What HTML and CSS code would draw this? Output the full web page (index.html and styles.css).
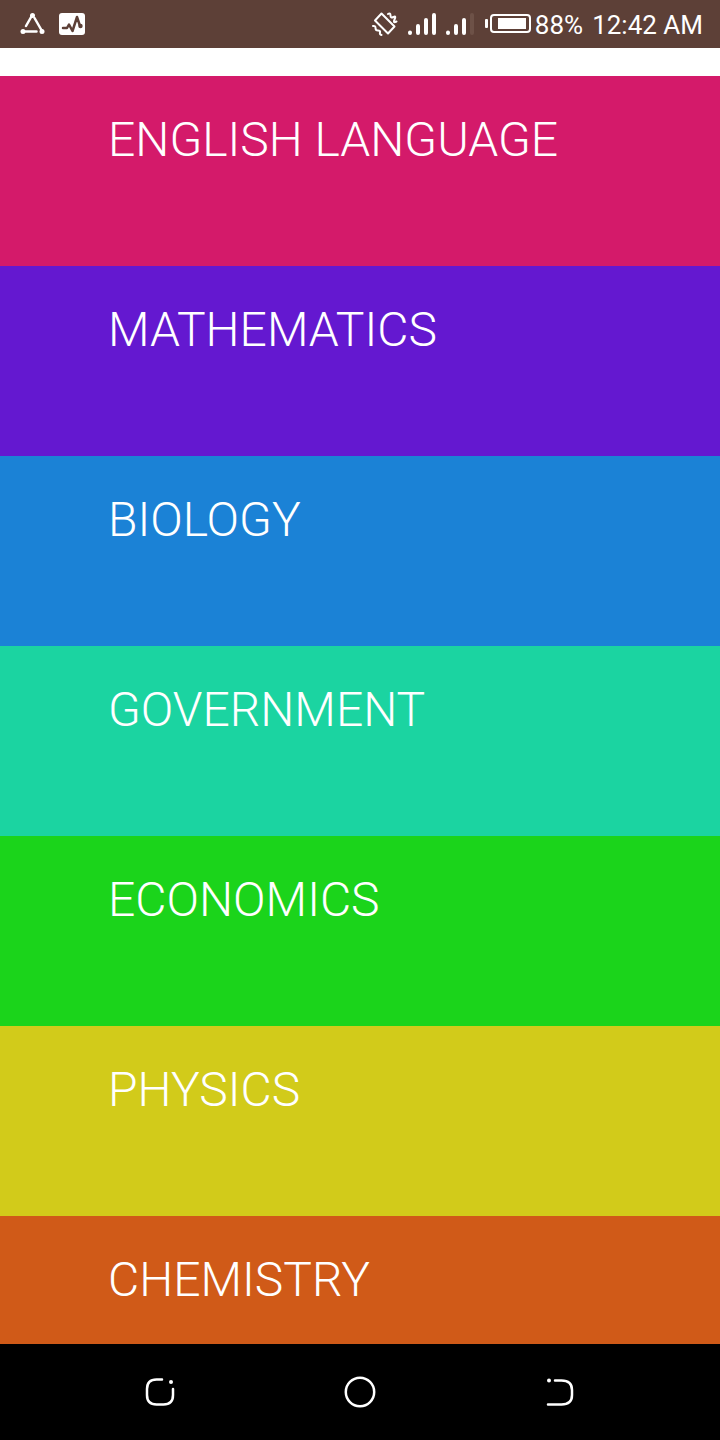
FILE: index.html
```html
<!DOCTYPE html>
<html lang="en">
<head>
    <meta charset="UTF-8">
    <meta name="viewport" content="width=device-width, initial-scale=1">
    <title>Subjects</title>
    <link rel="stylesheet" href="styles.css">
</head>
<body>
    <!-- Status bar -->
    <header class="status-bar">
        <div class="notifications">
            <svg width="26" height="24" viewBox="0 0 26 24" fill="none" stroke="#fff" stroke-width="2.500" stroke-linecap="round">
                <path d="M12 3.500L6 14M14.500 6L22 19M3.500 19.500H16.500"/>
                <g fill="#fff" stroke="none">
                    <circle cx="12.500" cy="3.500" r="2.500"/>
                    <circle cx="3" cy="19.500" r="2.500"/>
                    <circle cx="22" cy="19.500" r="2.500"/>
                </g>
            </svg>
            <svg width="26" height="24" viewBox="0 0 26 24" fill="none">
                <rect y="1" width="26" height="22" rx="3" fill="#fff"/>
                <path d="M4 16H8L10 12.500L13.500 19L18 5L21 14" stroke="#5d4037" stroke-width="2.500" stroke-linecap="round" stroke-linejoin="round"/>
                <circle cx="21.500" cy="14" r="2.200" fill="#5d4037"/>
            </svg>
        </div>

        <div class="system">
            <!-- Auto rotate -->
            <svg class="rotate" width="26" height="26" viewBox="0 0 26 26" fill="none" stroke="#fff" stroke-width="2" stroke-linecap="round" stroke-linejoin="round">
                <path d="M9.500 2.500L22.500 15.500L16 22.500L3 9.500Z"/>
                <path d="M16 3Q18.500 1.500 18.500 4.500T21.500 6T22.500 8.500T24.500 10.500"/>
                <path d="M1 15Q3.500 14.500 3.500 17T6 19.500T8 21.500T9.500 24"/>
            </svg>
            <!-- Signal, first and second SIM -->
            <svg class="signal" width="28" height="24" viewBox="0 0 28 24" stroke="#fff" stroke-width="4" stroke-linecap="round">
                <path d="M2 20.500V21M10 14V21M18 8V21M26 3V21"/>
            </svg>
            <svg class="signal" width="28" height="24" viewBox="0 0 28 24" stroke="#fff" stroke-width="4" stroke-linecap="round">
                <path d="M2 20.500V21M10 14V21M18 8V21"/>
                <path d="M26 3V21" stroke="#6d5147"/>
            </svg>
            <!-- Battery -->
            <svg class="battery" width="47" height="20" viewBox="-1 0 47 20" fill="none">
                <rect y="5" width="3" height="9" rx="1" fill="#fff"/>
                <rect x="6" y="1" width="39" height="17" rx="3" stroke="#fff" stroke-width="2"/>
                <rect x="13" y="4" width="28" height="11" fill="#fff"/>
            </svg>
            <span class="percent">88%</span>
            <time class="clock">12:42 AM</time>
        </div>
    </header>

    <!-- Subject list -->
    <main class="subjects">
        <a class="subject english" href="#english">ENGLISH LANGUAGE</a>
        <a class="subject mathematics" href="#mathematics">MATHEMATICS</a>
        <a class="subject biology" href="#biology">BIOLOGY</a>
        <a class="subject government" href="#government">GOVERNMENT</a>
        <a class="subject economics" href="#economics">ECONOMICS</a>
        <a class="subject physics" href="#physics">PHYSICS</a>
        <a class="subject chemistry" href="#chemistry">CHEMISTRY</a>
    </main>

    <!-- Navigation bar -->
    <nav class="nav-bar">
        <button type="button" aria-label="Recent apps">
            <svg width="32" height="32" viewBox="0 0 32 32" fill="none" stroke="#fff" stroke-width="2.500" stroke-linecap="round">
                <path d="M18 3.500H12.500Q3 3.500 3 13V19Q3 28.500 12.500 28.500H19.500Q29 28.500 29 19V13"/>
                <circle cx="27" cy="6" r="2" fill="#fff" stroke="none"/>
            </svg>
        </button>
        <button type="button" aria-label="Home">
            <svg width="32" height="32" viewBox="0 0 32 32" fill="none" stroke="#fff" stroke-width="2.500">
                <circle cx="16" cy="16" r="14.200"/>
            </svg>
        </button>
        <button type="button" aria-label="Back">
            <svg width="32" height="32" viewBox="0 0 32 32" fill="none" stroke="#fff" stroke-width="2.500" stroke-linecap="round">
                <path d="M11 4.500H17.500Q28 4.500 28 14V19Q28 28.500 17.500 28.500H4"/>
                <circle cx="5" cy="4.500" r="2" fill="#fff" stroke="none"/>
            </svg>
        </button>
    </nav>
</body>
</html>
```

FILE: styles.css
```css
/* General styles */
body {
    font-family: Roboto, sans-serif;
    margin: 0;
    height: 100vh;
    display: flex;
    flex-direction: column;
    background-color: #fff;
}

svg {
    display: block;
    flex: none;
}

/* Status bar */
.status-bar {
    display: flex;
    justify-content: space-between;
    align-items: center;
    flex: none;
    height: 48px;
    padding: 0 17px 0 20px;
    box-sizing: border-box;
    background-color: #5d4037;
    color: #fff;
    font-size: 26px;
    line-height: 32px;
    white-space: nowrap;
}

.notifications,
.system {
    display: flex;
    align-items: center;
}

.notifications {
    gap: 13px;
}

.rotate,
.signal {
    margin-right: 10px;
}

.battery {
    margin-right: 4px;
}

.percent,
.clock {
    padding-top: 2px;
}

.percent {
    margin-right: 9px;
}

/* Subject list */
.subjects {
    flex: 1;
    min-height: 0;
    padding-top: 28px;
    overflow: hidden;
}

.subject {
    display: block;
    height: 190px;
    padding: 36px 16px 0 108px;
    box-sizing: border-box;
    color: #fff;
    font-size: 48px;
    font-weight: 300;
    line-height: 56px;
    text-decoration: none;
}

.english {
    background-color: #d41a6a;
}

.mathematics {
    background-color: #6418d0;
}

.biology {
    background-color: #1b82d6;
}

.government {
    background-color: #1bd4a1;
}

.economics {
    background-color: #1bd41b;
}

.physics {
    background-color: #d2cb1a;
}

.chemistry {
    background-color: #d05a18;
}

/* Navigation bar */
.nav-bar {
    display: flex;
    justify-content: center;
    align-items: center;
    flex: none;
    height: 96px;
    background-color: #000;
}

.nav-bar button {
    display: flex;
    justify-content: center;
    width: 200px;
    padding: 16px 0;
    border: none;
    background: none;
    cursor: pointer;
}
```
